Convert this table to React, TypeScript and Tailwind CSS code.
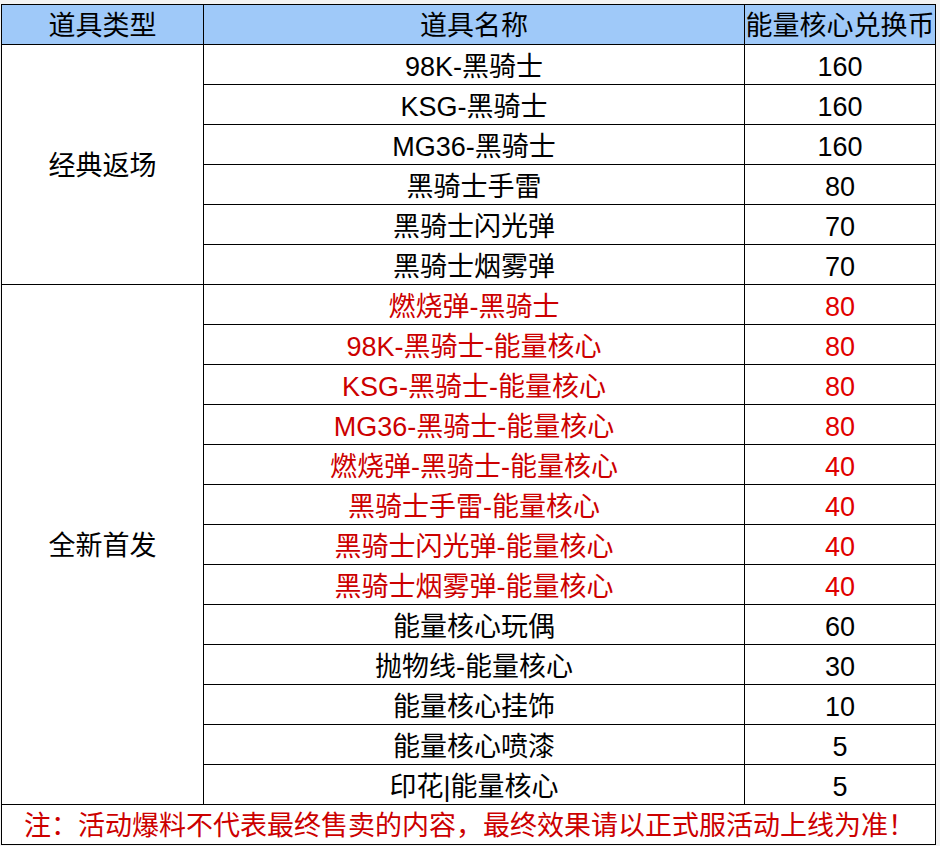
import React from "react";

type Row = { name: string; val: string; red?: boolean };

const classic: Row[] = [
  { name: "98K-黑骑士", val: "160" },
  { name: "KSG-黑骑士", val: "160" },
  { name: "MG36-黑骑士", val: "160" },
  { name: "黑骑士手雷", val: "80" },
  { name: "黑骑士闪光弹", val: "70" },
  { name: "黑骑士烟雾弹", val: "70" },
];

const fresh: Row[] = [
  { name: "燃烧弹-黑骑士", val: "80", red: true },
  { name: "98K-黑骑士-能量核心", val: "80", red: true },
  { name: "KSG-黑骑士-能量核心", val: "80", red: true },
  { name: "MG36-黑骑士-能量核心", val: "80", red: true },
  { name: "燃烧弹-黑骑士-能量核心", val: "40", red: true },
  { name: "黑骑士手雷-能量核心", val: "40", red: true },
  { name: "黑骑士闪光弹-能量核心", val: "40", red: true },
  { name: "黑骑士烟雾弹-能量核心", val: "40", red: true },
  { name: "能量核心玩偶", val: "60" },
  { name: "抛物线-能量核心", val: "30" },
  { name: "能量核心挂饰", val: "10" },
  { name: "能量核心喷漆", val: "5" },
  { name: "印花|能量核心", val: "5" },
];

const cell = "border border-black text-center align-middle px-0 pb-0 leading-none whitespace-nowrap";

function Group({ label, rows }: { label: string; rows: Row[] }) {
  return (
    <>
      {rows.map((r, i) => (
        <tr key={r.name} className="h-[40px]">
          {i === 0 && (
            <td rowSpan={rows.length} className={cell + " pt-[4px] text-black"}>
              {label}
            </td>
          )}
          <td className={cell + " pt-[6px]" + (r.red ? " text-[#cc0000]" : " text-black")}>
            {r.name}
          </td>
          <td className={cell + " pt-[6px]" + (r.red ? " text-[#e00000]" : " text-black")}>
            {r.val}
          </td>
        </tr>
      ))}
    </>
  );
}

export default function App() {
  return (
    <div
      className="w-[940px] h-[846px] bg-[#f3f3f3] pt-[4px] pl-[1px] overflow-hidden"
      style={{ fontFamily: '"Liberation Sans", "Noto Sans CJK SC", sans-serif' }}
    >
      <table className="table-fixed border-collapse bg-white text-[27px] w-[934px]">
        <colgroup>
          <col className="w-[202px]" />
          <col className="w-[541px]" />
          <col className="w-[191px]" />
        </colgroup>
        <thead>
          <tr className="h-[40px] bg-[#9fc9f9]">
            <th className={cell + " pt-[4px] font-normal text-black"}>道具类型</th>
            <th className={cell + " pt-[4px] font-normal text-black"}>道具名称</th>
            <th className={cell + " pt-[4px] font-normal text-black"}>能量核心兑换币</th>
          </tr>
        </thead>
        <tbody>
          <Group label="经典返场" rows={classic} />
          <Group label="全新首发" rows={fresh} />
          <tr className="h-[40px]">
            <td
              colSpan={3}
              className="border border-black text-left align-middle pl-[22px] pr-0 pb-0 pt-[4px] leading-none text-[#cc0000] whitespace-nowrap"
            >
              注：活动爆料不代表最终售卖的内容，最终效果请以正式服活动上线为准！
            </td>
          </tr>
        </tbody>
      </table>
    </div>
  );
}
